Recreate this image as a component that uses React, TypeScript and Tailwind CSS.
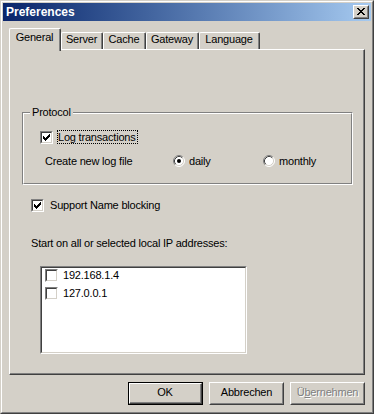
import type { ReactNode } from "react";

const FONT = "font-['Liberation_Sans','DejaVu_Sans',sans-serif]";

function CheckMark() {
  return (
    <svg width="7" height="7" viewBox="0 0 7 7" shapeRendering="crispEdges" className="block">
      <path
        d="M0 2h1v3H0zM1 3h1v3H1zM2 4h1v3H2zM3 3h1v3H3zM4 2h1v3H4zM5 1h1v3H5zM6 0h1v3H6z"
        fill="#000"
      />
    </svg>
  );
}

function CheckBox({ checked }: { checked?: boolean }) {
  return (
    <span className="flex h-[13px] w-[13px] shrink-0 border border-t-[#808080] border-l-[#808080] border-r-white border-b-white">
      <span className="flex flex-1 items-start border border-t-[#404040] border-l-[#404040] border-r-[#d4d0c8] border-b-[#d4d0c8] bg-white p-px">
        {checked && <CheckMark />}
      </span>
    </span>
  );
}

function Radio({ checked }: { checked?: boolean }) {
  return (
    <svg width="12" height="12" viewBox="0 0 12 12" className="block shrink-0">
      <circle cx="6" cy="6" r="5" fill="#fff" />
      <path d="M2.11 9.89A5.5 5.5 0 0 1 9.89 2.11" stroke="#808080" fill="none" />
      <path d="M9.89 2.11A5.5 5.5 0 0 1 2.11 9.89" stroke="#fff" fill="none" />
      <path d="M2.82 9.18A4.5 4.5 0 0 1 9.18 2.82" stroke="#404040" fill="none" />
      <path d="M9.18 2.82A4.5 4.5 0 0 1 2.82 9.18" stroke="#d4d0c8" fill="none" />
      {checked && <circle cx="6" cy="6" r="2" fill="#000" />}
    </svg>
  );
}

function CloseButton() {
  return (
    <div className="flex h-[14px] w-[16px] border border-t-white border-l-white border-r-[#404040] border-b-[#404040] bg-[#d4d0c8]">
      <div className="flex flex-1 items-start border border-t-[#d4d0c8] border-l-[#d4d0c8] border-r-[#808080] border-b-[#808080] pl-[2px] pt-px">
        <svg width="8" height="7" viewBox="0 0 8 7" shapeRendering="crispEdges" className="block">
          <path
            d="M0 0h2v1H0zM6 0h2v1H6zM1 1h2v1H1zM5 1h2v1H5zM2 2h4v1H2zM3 3h2v1H3zM2 4h4v1H2zM1 5h2v1H1zM5 5h2v1H5zM0 6h2v1H0zM6 6h2v1H6z"
            fill="#000"
          />
        </svg>
      </div>
    </div>
  );
}

function Button({ children, isDefault, disabled }: { children: ReactNode; isDefault?: boolean; disabled?: boolean }) {
  const label = (
    <span className={disabled ? "text-[#808080] [text-shadow:1px_1px_0_#fff]" : "text-black"}>{children}</span>
  );
  if (isDefault) {
    return (
      <div className="flex h-[23px] w-[75px] border border-black">
        <div className="flex flex-1 border border-t-white border-l-white border-r-[#404040] border-b-[#404040]">
          <div className="flex flex-1 items-center justify-center border-r border-b border-r-[#808080] border-b-[#808080] pb-[2px]">
            {label}
          </div>
        </div>
      </div>
    );
  }
  return (
    <div className="flex h-[23px] w-[75px] border border-t-white border-l-white border-r-[#404040] border-b-[#404040]">
      <div className="flex flex-1 items-center justify-center border border-t-[#d4d0c8] border-l-[#d4d0c8] border-r-[#808080] border-b-[#808080] pb-[2px]">
        {label}
      </div>
    </div>
  );
}

const tabs = [
  { name: "Server", w: "w-[42px]" },
  { name: "Cache", w: "w-[43px]" },
  { name: "Gateway", w: "w-[53px]" },
  { name: "Language", w: "w-[61px]" },
];

const addresses = ["192.168.1.4", "127.0.0.1"];

export default function App() {
  return (
    <div className={`${FONT} h-[414px] w-[374px] text-[11px] leading-[13px] tracking-[-0.2px] text-black`}>
      <div className="h-full border border-t-[#d4d0c8] border-l-[#d4d0c8] border-r-[#404040] border-b-[#404040] bg-[#d4d0c8]">
        <div className="flex h-full flex-col border border-t-white border-l-white border-r-[#808080] border-b-[#808080] p-px">
          {/* Title bar */}
          <div className="flex h-[18px] shrink-0 items-center justify-between bg-linear-to-r from-[#0a246a] to-[#a6caf0] pl-[3px] pr-[2px]">
            <span className="text-[12px] font-bold tracking-normal text-white">Preferences</span>
            <CloseButton />
          </div>

          <div className="flex flex-1 flex-col px-[6px]">
            {/* Tabs */}
            <div className="mt-[7px] flex h-[21px] items-end">
              <div className="relative z-10 mb-[-2px] flex h-[23px] w-[52px] rounded-tl-[2px] rounded-tr-[2px] border-t border-l border-r border-t-white border-l-white border-r-[#404040] bg-[#d4d0c8]">
                <div className="flex flex-1 justify-center border-r border-r-[#808080] pt-[2px]">General</div>
              </div>
              {tabs.map((tab) => (
                <div
                  key={tab.name}
                  className={`flex h-[17px] ${tab.w} rounded-tl-[2px] rounded-tr-[2px] border-t border-l border-r border-t-white border-l-white border-r-[#404040]`}
                >
                  <div className="flex flex-1 justify-center border-r border-r-[#808080]">{tab.name}</div>
                </div>
              ))}
            </div>

            {/* Tab panel */}
            <div className="h-[326px] border border-t-white border-l-white border-r-[#404040] border-b-[#404040]">
              <div className="flex h-full flex-col border-r border-b border-r-[#808080] border-b-[#808080]">
                {/* Protocol group */}
                <div className="relative ml-[12px] mt-[62px] h-[73px] w-[331px] border border-t-[#808080] border-l-[#808080] border-r-white border-b-white">
                  <div className="flex h-full flex-col border border-t-white border-l-white border-r-[#808080] border-b-[#808080]">
                    <div className="ml-[16px] mt-[16px] flex items-end gap-[4px]">
                      <CheckBox checked />
                      <span className="border border-dotted border-black pr-px leading-[12px]">Log transactions</span>
                    </div>
                    <div className="ml-[21px] mt-[11px] flex h-[12px] items-center">
                      <span className="w-[128px]">Create new log file</span>
                      <span className="flex w-[90px] items-center gap-[4px]">
                        <Radio checked />
                        daily
                      </span>
                      <span className="flex items-center gap-[4px]">
                        <Radio />
                        monthly
                      </span>
                    </div>
                  </div>
                  <span className="absolute left-[7px] top-[-7px] bg-[#d4d0c8] px-[2px]">Protocol</span>
                </div>

                <div className="ml-[21px] mt-[14px] flex items-center gap-[6px]">
                  <CheckBox checked />
                  <span>Support Name blocking</span>
                </div>

                <p className="ml-[21px] mt-[25px]">Start on all or selected local IP addresses:</p>

                {/* Address list */}
                <div className="ml-[30px] mt-[16px] h-[88px] w-[207px] border border-t-[#808080] border-l-[#808080] border-r-white border-b-white">
                  <div className="h-full border border-t-[#404040] border-l-[#404040] border-r-[#d4d0c8] border-b-[#d4d0c8] bg-white pl-[3px] pt-px">
                    {addresses.map((ip) => (
                      <div key={ip} className="flex h-[18px] items-start gap-[5px]">
                        <CheckBox />
                        <span>{ip}</span>
                      </div>
                    ))}
                  </div>
                </div>
              </div>
            </div>

            {/* Buttons */}
            <div className="mt-[7px] flex justify-end gap-[6px]">
              <Button isDefault>OK</Button>
              <Button>Abbrechen</Button>
              <Button disabled>
                Ü<span className="underline">b</span>ernehmen
              </Button>
            </div>
          </div>
        </div>
      </div>
    </div>
  );
}
